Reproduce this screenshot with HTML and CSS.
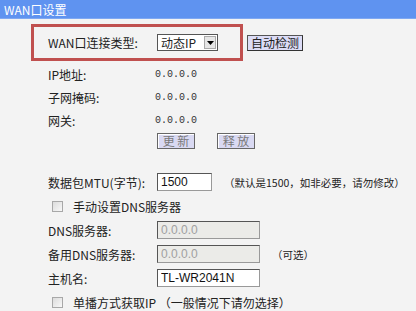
FILE: index.html
```html
<!DOCTYPE html>
<html lang="zh-CN">
<head>
    <meta charset="UTF-8">
    <meta name="viewport" content="width=device-width, initial-scale=1.0">
    <title>WAN口设置</title>
    <link rel="stylesheet" href="styles.css">
</head>
<body>
    <div class="titlebar">WAN口设置</div>

    <div class="content">
        <div class="type-row">
            <div class="highlight">
                <span class="label">WAN口连接类型:</span>
                <div class="select">
                    <span class="select-text">动态IP</span>
                    <span class="select-arrow">
                        <svg width="7" height="4" viewBox="0 0 7 4"><path d="M0 0h7L3.5 4z" fill="#000"/></svg>
                    </span>
                </div>
            </div>
            <button class="btn">自动检测</button>
        </div>

        <div class="info">
            <div class="row"><span class="label">IP地址:</span><span class="value">0.0.0.0</span></div>
            <div class="row"><span class="label">子网掩码:</span><span class="value">0.0.0.0</span></div>
            <div class="row"><span class="label">网关:</span><span class="value">0.0.0.0</span></div>
        </div>

        <div class="actions">
            <button class="btn btn-off">更 新</button>
            <button class="btn btn-off">释 放</button>
        </div>

        <div class="form">
            <div class="row">
                <span class="label">数据包MTU(字节):</span>
                <input class="field field-short" type="text" value="1500">
                <span class="note">（默认是1500，如非必要，请勿修改）</span>
            </div>
            <div class="row check-row">
                <span class="check"></span>
                <span class="check-text">手动设置DNS服务器</span>
            </div>
            <div class="row">
                <span class="label">DNS服务器:</span>
                <input class="field" type="text" value="0.0.0.0" disabled>
            </div>
            <div class="row">
                <span class="label">备用DNS服务器:</span>
                <input class="field" type="text" value="0.0.0.0" disabled>
                <span class="note">（可选）</span>
            </div>
            <div class="row">
                <span class="label">主机名:</span>
                <input class="field" type="text" value="TL-WR2041N">
            </div>
            <div class="row check-row">
                <span class="check"></span>
                <span class="check-text">单播方式获取IP （一般情况下请勿选择）</span>
            </div>
        </div>
    </div>
</body>
</html>
```

FILE: styles.css
```css
body {
    margin: 0;
    padding: 0;
    background-color: #f3f3f3;
    font-family: "Noto Sans CJK SC", "Liberation Sans", sans-serif;
    font-size: 12px;
    color: #222;
    width: 416px;
    height: 311px;
    overflow: hidden;
}
.titlebar {
    height: 19px;
    line-height: 19px;
    padding-left: 4px;
    background-color: #5f93f0;
    border-bottom: 1px solid #7fa8f2;
    color: #fff;
    font-size: 12px;
    box-sizing: border-box;
}
.content {
    padding-left: 31px;
}
.type-row {
    display: flex;
    align-items: center;
    margin-top: 5px;
}
.highlight {
    display: flex;
    align-items: center;
    height: 37px;
    width: 212px;
    box-sizing: border-box;
    border: 3px solid #c0504f;
    padding-left: 14px;
}
.label {
    width: 109px;
    flex-shrink: 0;
    white-space: nowrap;
}
.select {
    display: flex;
    align-items: center;
    width: 61px;
    height: 17px;
    box-sizing: border-box;
    border: 1px solid #555;
    background-color: #fff;
}
.select-text {
    flex: 1;
    padding-left: 3px;
    font-size: 12px;
    line-height: 15px;
}
.select-arrow {
    display: flex;
    align-items: center;
    justify-content: center;
    width: 12px;
    height: 13px;
    margin-right: 1px;
    background-color: #e6e6e6;
    border: 1px solid #aaa;
    box-sizing: border-box;
}
.btn {
    font-family: "Noto Sans CJK SC", sans-serif;
    font-size: 12px;
    height: 16px;
    line-height: 12px;
    padding: 0 3px;
    margin: 0;
    background-color: #dcdcf6;
    border: 1px solid #555;
    border-right-color: #333;
    border-bottom-color: #333;
    color: #222;
}
.type-row .btn {
    margin-left: 4px;
    height: 16px;
}
.btn-off {
    width: 38px;
    color: #7a7a7a;
    border: 1px solid #666;
    box-shadow: inset 1px 1px 0 #fff;
    background-color: #d9d9f2;
}
.info {
    margin-top: 2px;
}
.row {
    display: flex;
    align-items: center;
    height: 23px;
    padding-left: 17px;
}
.value {
    margin-left: -2px;
    font-family: "Liberation Mono", monospace;
    font-size: 10px;
    color: #333;
}
.actions {
    display: flex;
    gap: 22px;
    padding-left: 126px;
    padding-top: 1px;
    margin-bottom: 21px;
}
.form .row {
    height: 24px;
}
.field {
    width: 103px;
    height: 18px;
    box-sizing: border-box;
    border: 1px solid #555;
    border-right-color: #999;
    border-bottom-color: #999;
    padding: 0 3px;
    margin: 0;
    font-family: "Liberation Sans", sans-serif;
    font-size: 12px;
    color: #111;
    background-color: #fff;
}
.field:disabled {
    background-color: #ebebe8;
    color: #a0a0a0;
}
.field-short {
    width: 55px;
}
.note {
    margin-left: 12px;
    white-space: nowrap;
    font-size: 10.5px;
}
.check-row {
    padding-left: 21px;
}
.check {
    width: 11px;
    height: 11px;
    box-sizing: border-box;
    border: 1px solid #a8a8a8;
    background: linear-gradient(135deg, #dcdcdc, #f8f8f8);
}
.check-text {
    margin-left: 10px;
    white-space: nowrap;
}
```
